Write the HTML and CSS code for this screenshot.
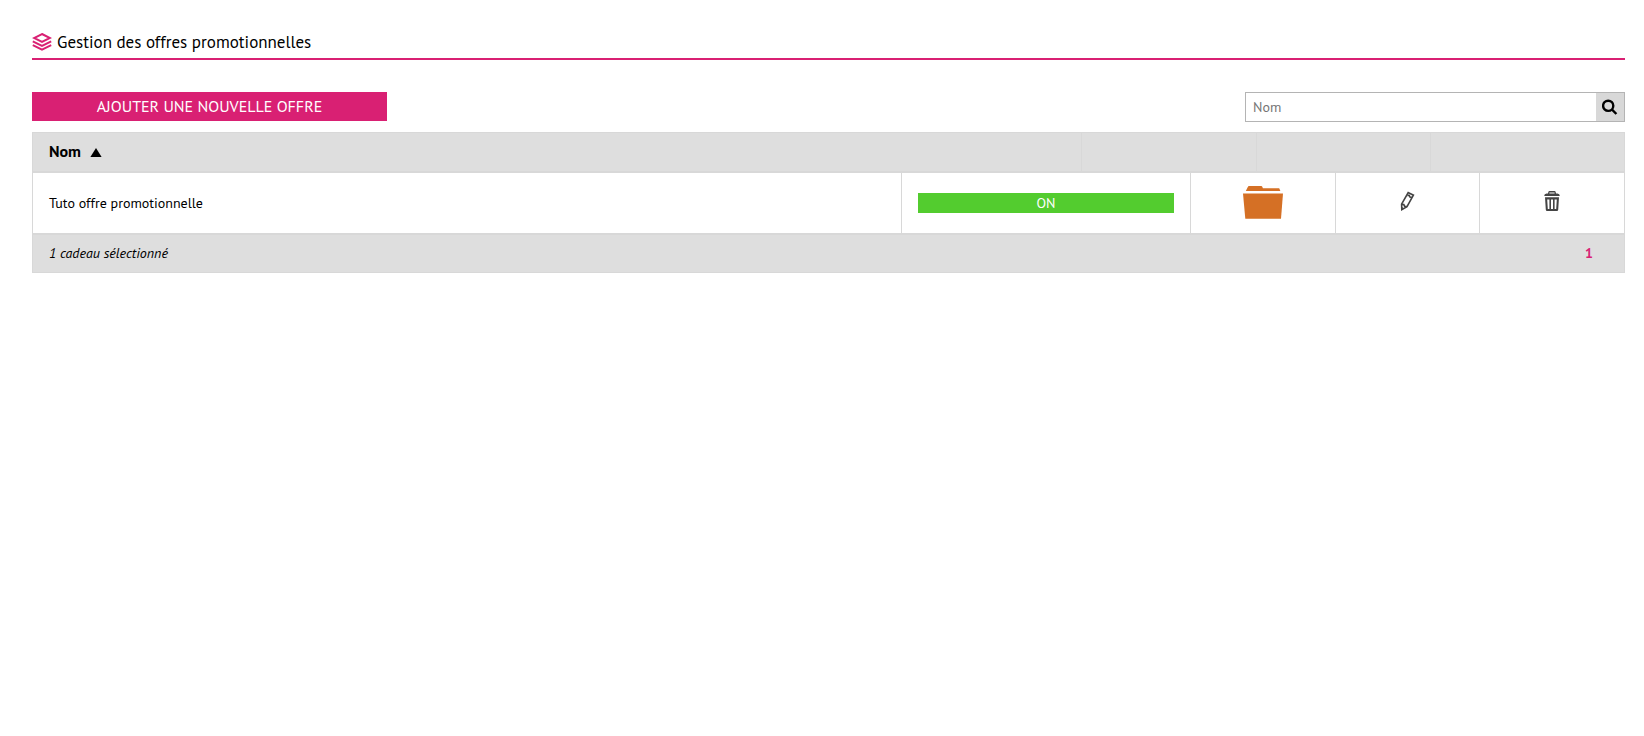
FILE: index.html
```html
<!DOCTYPE html>
<html lang="fr">
<head>
<meta charset="utf-8">
<meta name="viewport" content="width=device-width, initial-scale=1">
<title>Gestion des offres promotionnelles</title>
<link rel="stylesheet" href="styles.css">
</head>
<body>
<main class="page">
  <header class="page-header">
    <svg class="layers-icon" viewBox="0 0 20 20" aria-hidden="true">
      <path d="M10 2 18 6 10 10 2 6z"/>
      <path d="M.8 9.4 10 13.8 19.2 9.4"/>
      <path d="M.8 13.2 10 17.6 19.2 13.2"/>
    </svg>
    <h1 class="page-title">Gestion des offres promotionnelles</h1>
  </header>

  <div class="toolbar">
    <button class="add-button" type="button">AJOUTER UNE NOUVELLE OFFRE</button>
    <form class="search" role="search">
      <input class="search-input" type="text" placeholder="Nom" aria-label="Nom">
      <button class="search-button" type="button" aria-label="Rechercher">
        <svg class="search-icon" viewBox="0 0 16 16" aria-hidden="true">
          <circle cx="6.2" cy="6.8" r="5.1"/>
          <path d="M9.8 10.4 14.4 15"/>
        </svg>
      </button>
    </form>
  </div>

  <table class="offers">
    <thead>
      <tr class="head-row">
        <th class="cell" scope="col">Nom
          <svg class="sort-icon" viewBox="0 0 12 10" aria-hidden="true"><path d="M6 1 11.6 10H.4z"/></svg>
        </th>
        <td class="cell"></td>
        <td class="cell"></td>
        <td class="cell"></td>
      </tr>
    </thead>
    <tbody>
      <tr class="offer-row">
        <td class="cell">Tuto offre promotionnelle</td>
        <td class="cell"><button class="status" type="button">ON</button></td>
        <td class="cell cell-action">
          <button class="icon-button" type="button" aria-label="Ouvrir">
            <svg class="folder-icon" viewBox="0 0 40 34" aria-hidden="true">
              <path d="M2.8 5 4.8 1Q5.2 0 6 0H18.2Q19 0 19.3.8L19.9 2.2H36.2L37.4 5H2.8z"/>
              <path d="M0 7.4H40L38 32.8H2.3z"/>
            </svg>
          </button>
        </td>
        <td class="cell cell-action">
          <button class="icon-button" type="button" aria-label="Modifier">
            <svg class="pencil-icon" viewBox="0 0 16 20" aria-hidden="true">
              <path d="M1.6 13.2 8.2 1.6 13.4 4.2 7 15.6 1.8 18.6z"/>
              <path d="M7.4 4.4 9.2 4.4 10 6 12 6.6M1.8 13.4 3.8 13.6 4.6 15.2 6.6 15.6"/>
              <path class="pencil-tip" d="M1.4 15.6 4 17.4 1.2 19.2z"/>
            </svg>
          </button>
        </td>
        <td class="cell cell-action">
          <button class="icon-button" type="button" aria-label="Supprimer">
            <svg class="trash-icon" viewBox="0 0 16 20" aria-hidden="true">
              <path class="trash-fill" fill-rule="evenodd" d="M.2 5Q.2 2.6 2.6 2.4H4L4.4.8Q4.7 0 5.4 0H10.6Q11.3 0 11.6.8L12 2.4H13.4Q15.8 2.6 15.8 5zM5.4 2.4H10.6V1.4H5.4z"/>
              <path class="trash-fill" fill-rule="evenodd" d="M1 6.2H15L14.2 18.8Q14 20 13 20H3Q2 20 1.8 18.8zM3.2 8.6 3.8 18H5.4V8.6zM7 8.6V18H9V8.6zM10.6 8.6V18H12.2L12.8 8.6z"/>
            </svg>
          </button>
        </td>
      </tr>
    </tbody>
    <tfoot>
      <tr class="foot-row">
        <td class="cell count">1 cadeau sélectionné</td>
        <td class="cell pager"><a class="page-link" href="#">1</a></td>
      </tr>
    </tfoot>
  </table>
</main>
</body>
</html>
```
FILE: styles.css
```css
* {
  box-sizing: border-box;
}

body {
  margin: 0;
  background: #fff;
  color: #000;
  font-family: "PT Sans", Lato, "Open Sans", sans-serif;
  font-size: 14px;
}

button,
input {
  margin: 0;
  padding: 0;
  border: 0;
  border-radius: 0;
  font-family: inherit;
}

button {
  cursor: pointer;
}

svg {
  display: block;
}

.page {
  padding: 28px 19px 32px 32px;
}

.page-header {
  display: flex;
  align-items: center;
  gap: 5px;
  height: 32px;
  padding-bottom: 2px;
  border-bottom: 2px solid #d92073;
}

.layers-icon {
  width: 20px;
  height: 20px;
  fill: none;
  stroke: #d92073;
  stroke-width: 2;
}

.page-title {
  margin: 0;
  font-size: 17px;
  font-weight: 400;
  line-height: 24px;
}

.toolbar {
  display: flex;
  justify-content: space-between;
  align-items: flex-start;
  gap: 32px;
  margin: 32px 0 10px;
}

.add-button {
  flex: 0 1 355px;
  height: 29px;
  padding-bottom: 2px;
  background: #d92073;
  color: #fff;
  font-size: 16px;
}

.search {
  display: flex;
  flex: 0 1 380px;
  height: 30px;
  border: 1px solid #b4b4b4;
}

.search-input {
  flex: 1;
  min-width: 0;
  padding: 0 7px;
  background: #fff;
  font-size: 14px;
}

.search-input::placeholder {
  color: #757575;
}

.search-button {
  display: grid;
  place-items: center;
  width: 28px;
  background: #d8d8d8;
}

.search-icon {
  width: 16px;
  height: 16px;
  fill: none;
  stroke: #000;
  stroke-width: 2.4;
}

.offers {
  display: block;
  border: 1px solid #d8d8d8;
}

.offers thead,
.offers tbody,
.offers tfoot {
  display: block;
}

.head-row,
.offer-row,
.foot-row {
  display: grid;
}

.head-row {
  grid-template-columns: 1049fr 175fr 174fr 194fr;
  min-height: 40px;
  border-bottom: 2px solid #d8d8d8;
  background: #dedede;
  font-size: 16px;
}

.offer-row {
  grid-template-columns: 6fr 2fr 1fr 1fr 1fr;
  min-height: 62px;
  border-bottom: 2px solid #d8d8d8;
}

.foot-row {
  grid-template-columns: 1fr auto;
  min-height: 37px;
  background: #dedede;
}

.cell {
  display: flex;
  align-items: center;
  padding: 0 16px;
}

.cell + .cell {
  border-left: 1px solid #d8d8d8;
}

.head-row .cell {
  gap: 9px;
  padding-bottom: 2px;
}

.foot-row .cell {
  padding-bottom: 2px;
  border: 0;
}

.sort-icon {
  width: 12px;
  height: 10px;
  margin-top: 2px;
}

.status {
  width: 100%;
  height: 20px;
  background: #53cc2f;
  color: #fff;
  font-size: 14px;
  line-height: 20px;
}

.cell-action {
  justify-content: center;
}

.icon-button {
  background: none;
}

.folder-icon {
  width: 40px;
  height: 34px;
  fill: #d57025;
}

.pencil-icon,
.trash-icon {
  width: 16px;
  height: 20px;
  margin-bottom: 4px;
  fill: none;
  stroke: #444;
  stroke-width: 1.6;
}

.pencil-tip,
.trash-fill {
  fill: #444;
  stroke: none;
}

.count {
  font-style: italic;
}

.foot-row .pager {
  padding-right: 31px;
}

.page-link {
  color: #d92073;
  font-weight: 700;
  text-decoration: none;
}
```
